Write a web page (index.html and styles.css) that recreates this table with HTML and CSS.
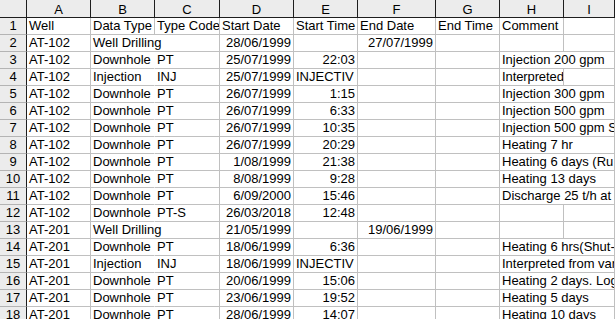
FILE: index.html
```html
<!DOCTYPE html>
<html>
<head>
<meta charset="utf-8">
<link rel="stylesheet" href="styles.css">
</head>
<body>
<div class="sheet">
  <div class="h corner"></div><div class="h">A</div><div class="h">B</div><div class="h">C</div><div class="h">D</div><div class="h">E</div><div class="h">F</div><div class="h">G</div><div class="h">H</div><div class="h">I</div>

  <div class="r">1</div><div class="c">Well</div><div class="c">Data Type</div><div class="c">Type Code</div><div class="c">Start Date</div><div class="c">Start Time</div><div class="c">End Date</div><div class="c">End Time</div><div class="c">Comment</div><div class="c"></div>

  <div class="r">2</div><div class="c">AT-102</div><div class="c s2">Well Drilling</div><div class="c n">28/06/1999</div><div class="c"></div><div class="c n">27/07/1999</div><div class="c"></div><div class="c"></div><div class="c"></div>

  <div class="r">3</div><div class="c">AT-102</div><div class="c nb">Downhole</div><div class="c">PT</div><div class="c n">25/07/1999</div><div class="c n">22:03</div><div class="c"></div><div class="c"></div><div class="c s2">Injection 200 gpm</div>

  <div class="r">4</div><div class="c">AT-102</div><div class="c nb">Injection</div><div class="c">INJ</div><div class="c n">25/07/1999</div><div class="c">INJECTIV</div><div class="c"></div><div class="c"></div><div class="c tight">Interpreted</div><div class="c"></div>

  <div class="r">5</div><div class="c">AT-102</div><div class="c nb">Downhole</div><div class="c">PT</div><div class="c n">26/07/1999</div><div class="c n">1:15</div><div class="c"></div><div class="c"></div><div class="c s2">Injection 300 gpm</div>

  <div class="r">6</div><div class="c">AT-102</div><div class="c nb">Downhole</div><div class="c">PT</div><div class="c n">26/07/1999</div><div class="c n">6:33</div><div class="c"></div><div class="c"></div><div class="c s2">Injection 500 gpm</div>

  <div class="r">7</div><div class="c">AT-102</div><div class="c nb">Downhole</div><div class="c">PT</div><div class="c n">26/07/1999</div><div class="c n">10:35</div><div class="c"></div><div class="c"></div><div class="c s2">Injection 500 gpm S</div>

  <div class="r">8</div><div class="c">AT-102</div><div class="c nb">Downhole</div><div class="c">PT</div><div class="c n">26/07/1999</div><div class="c n">20:29</div><div class="c"></div><div class="c"></div><div class="c s2">Heating 7 hr</div>

  <div class="r">9</div><div class="c">AT-102</div><div class="c nb">Downhole</div><div class="c">PT</div><div class="c n">1/08/1999</div><div class="c n">21:38</div><div class="c"></div><div class="c"></div><div class="c s2">Heating 6 days (Ru</div>

  <div class="r">10</div><div class="c">AT-102</div><div class="c nb">Downhole</div><div class="c">PT</div><div class="c n">8/08/1999</div><div class="c n">9:28</div><div class="c"></div><div class="c"></div><div class="c s2">Heating 13 days</div>

  <div class="r">11</div><div class="c">AT-102</div><div class="c nb">Downhole</div><div class="c">PT</div><div class="c n">6/09/2000</div><div class="c n">15:46</div><div class="c"></div><div class="c"></div><div class="c s2">Discharge 25 t/h at</div>

  <div class="r">12</div><div class="c">AT-102</div><div class="c nb">Downhole</div><div class="c">PT-S</div><div class="c n">26/03/2018</div><div class="c n">12:48</div><div class="c"></div><div class="c"></div><div class="c"></div><div class="c"></div>

  <div class="r">13</div><div class="c">AT-201</div><div class="c s2">Well Drilling</div><div class="c n">21/05/1999</div><div class="c"></div><div class="c n">19/06/1999</div><div class="c"></div><div class="c"></div><div class="c"></div>

  <div class="r">14</div><div class="c">AT-201</div><div class="c nb">Downhole</div><div class="c">PT</div><div class="c n">18/06/1999</div><div class="c n">6:36</div><div class="c"></div><div class="c"></div><div class="c s2">Heating 6 hrs(Shut-i</div>

  <div class="r">15</div><div class="c">AT-201</div><div class="c nb">Injection</div><div class="c">INJ</div><div class="c n">18/06/1999</div><div class="c">INJECTIV</div><div class="c"></div><div class="c"></div><div class="c s2">Interpreted from vari</div>

  <div class="r">16</div><div class="c">AT-201</div><div class="c nb">Downhole</div><div class="c">PT</div><div class="c n">20/06/1999</div><div class="c n">15:06</div><div class="c"></div><div class="c"></div><div class="c s2">Heating 2 days. Log</div>

  <div class="r">17</div><div class="c">AT-201</div><div class="c nb">Downhole</div><div class="c">PT</div><div class="c n">23/06/1999</div><div class="c n">19:52</div><div class="c"></div><div class="c"></div><div class="c s2">Heating 5 days</div>

  <div class="r">18</div><div class="c">AT-201</div><div class="c nb">Downhole</div><div class="c">PT</div><div class="c n">28/06/1999</div><div class="c n">14:07</div><div class="c"></div><div class="c"></div><div class="c s2">Heating 10 days</div>
</div>
</body>
</html>
```

FILE: styles.css
```css
html, body {
  margin: 0;
  padding: 0;
  background: #ffffff;
  overflow: hidden;
}

body {
  font-family: "Liberation Sans", Arial, sans-serif;
  font-size: 13px;
  color: #000000;
}

.sheet {
  display: grid;
  grid-template-columns: 27px 64px 64px 65px 74px 64px 78px 64px 64px 51px;
  grid-template-rows: 18px;
  grid-auto-rows: 17px;
  width: 615px;
}

.sheet > div {
  box-sizing: border-box;
  border-right: 1px solid #c0c0c0;
  border-bottom: 1px solid #c0c0c0;
  padding: 0 2px;
  line-height: 16px;
  white-space: nowrap;
  overflow: hidden;
}

.sheet > .h {
  background: #ececec;
  border-right-color: #1e1e1e;
  border-bottom-color: #1e1e1e;
  text-align: center;
  padding-top: 2px;
  line-height: 15px;
}

.sheet > .r {
  background: #ececec;
  border-right-color: #1e1e1e;
  border-bottom-color: #b4b4b4;
  text-align: center;
  padding: 0;
}

.sheet > .n {
  text-align: right;
}

.sheet > .s2 {
  grid-column: span 2;
}

.sheet > .nb {
  border-right-color: #ffffff;
}

.sheet > .tight {
  padding: 0 0 0 2px;
  letter-spacing: -0.1px;
}
```
